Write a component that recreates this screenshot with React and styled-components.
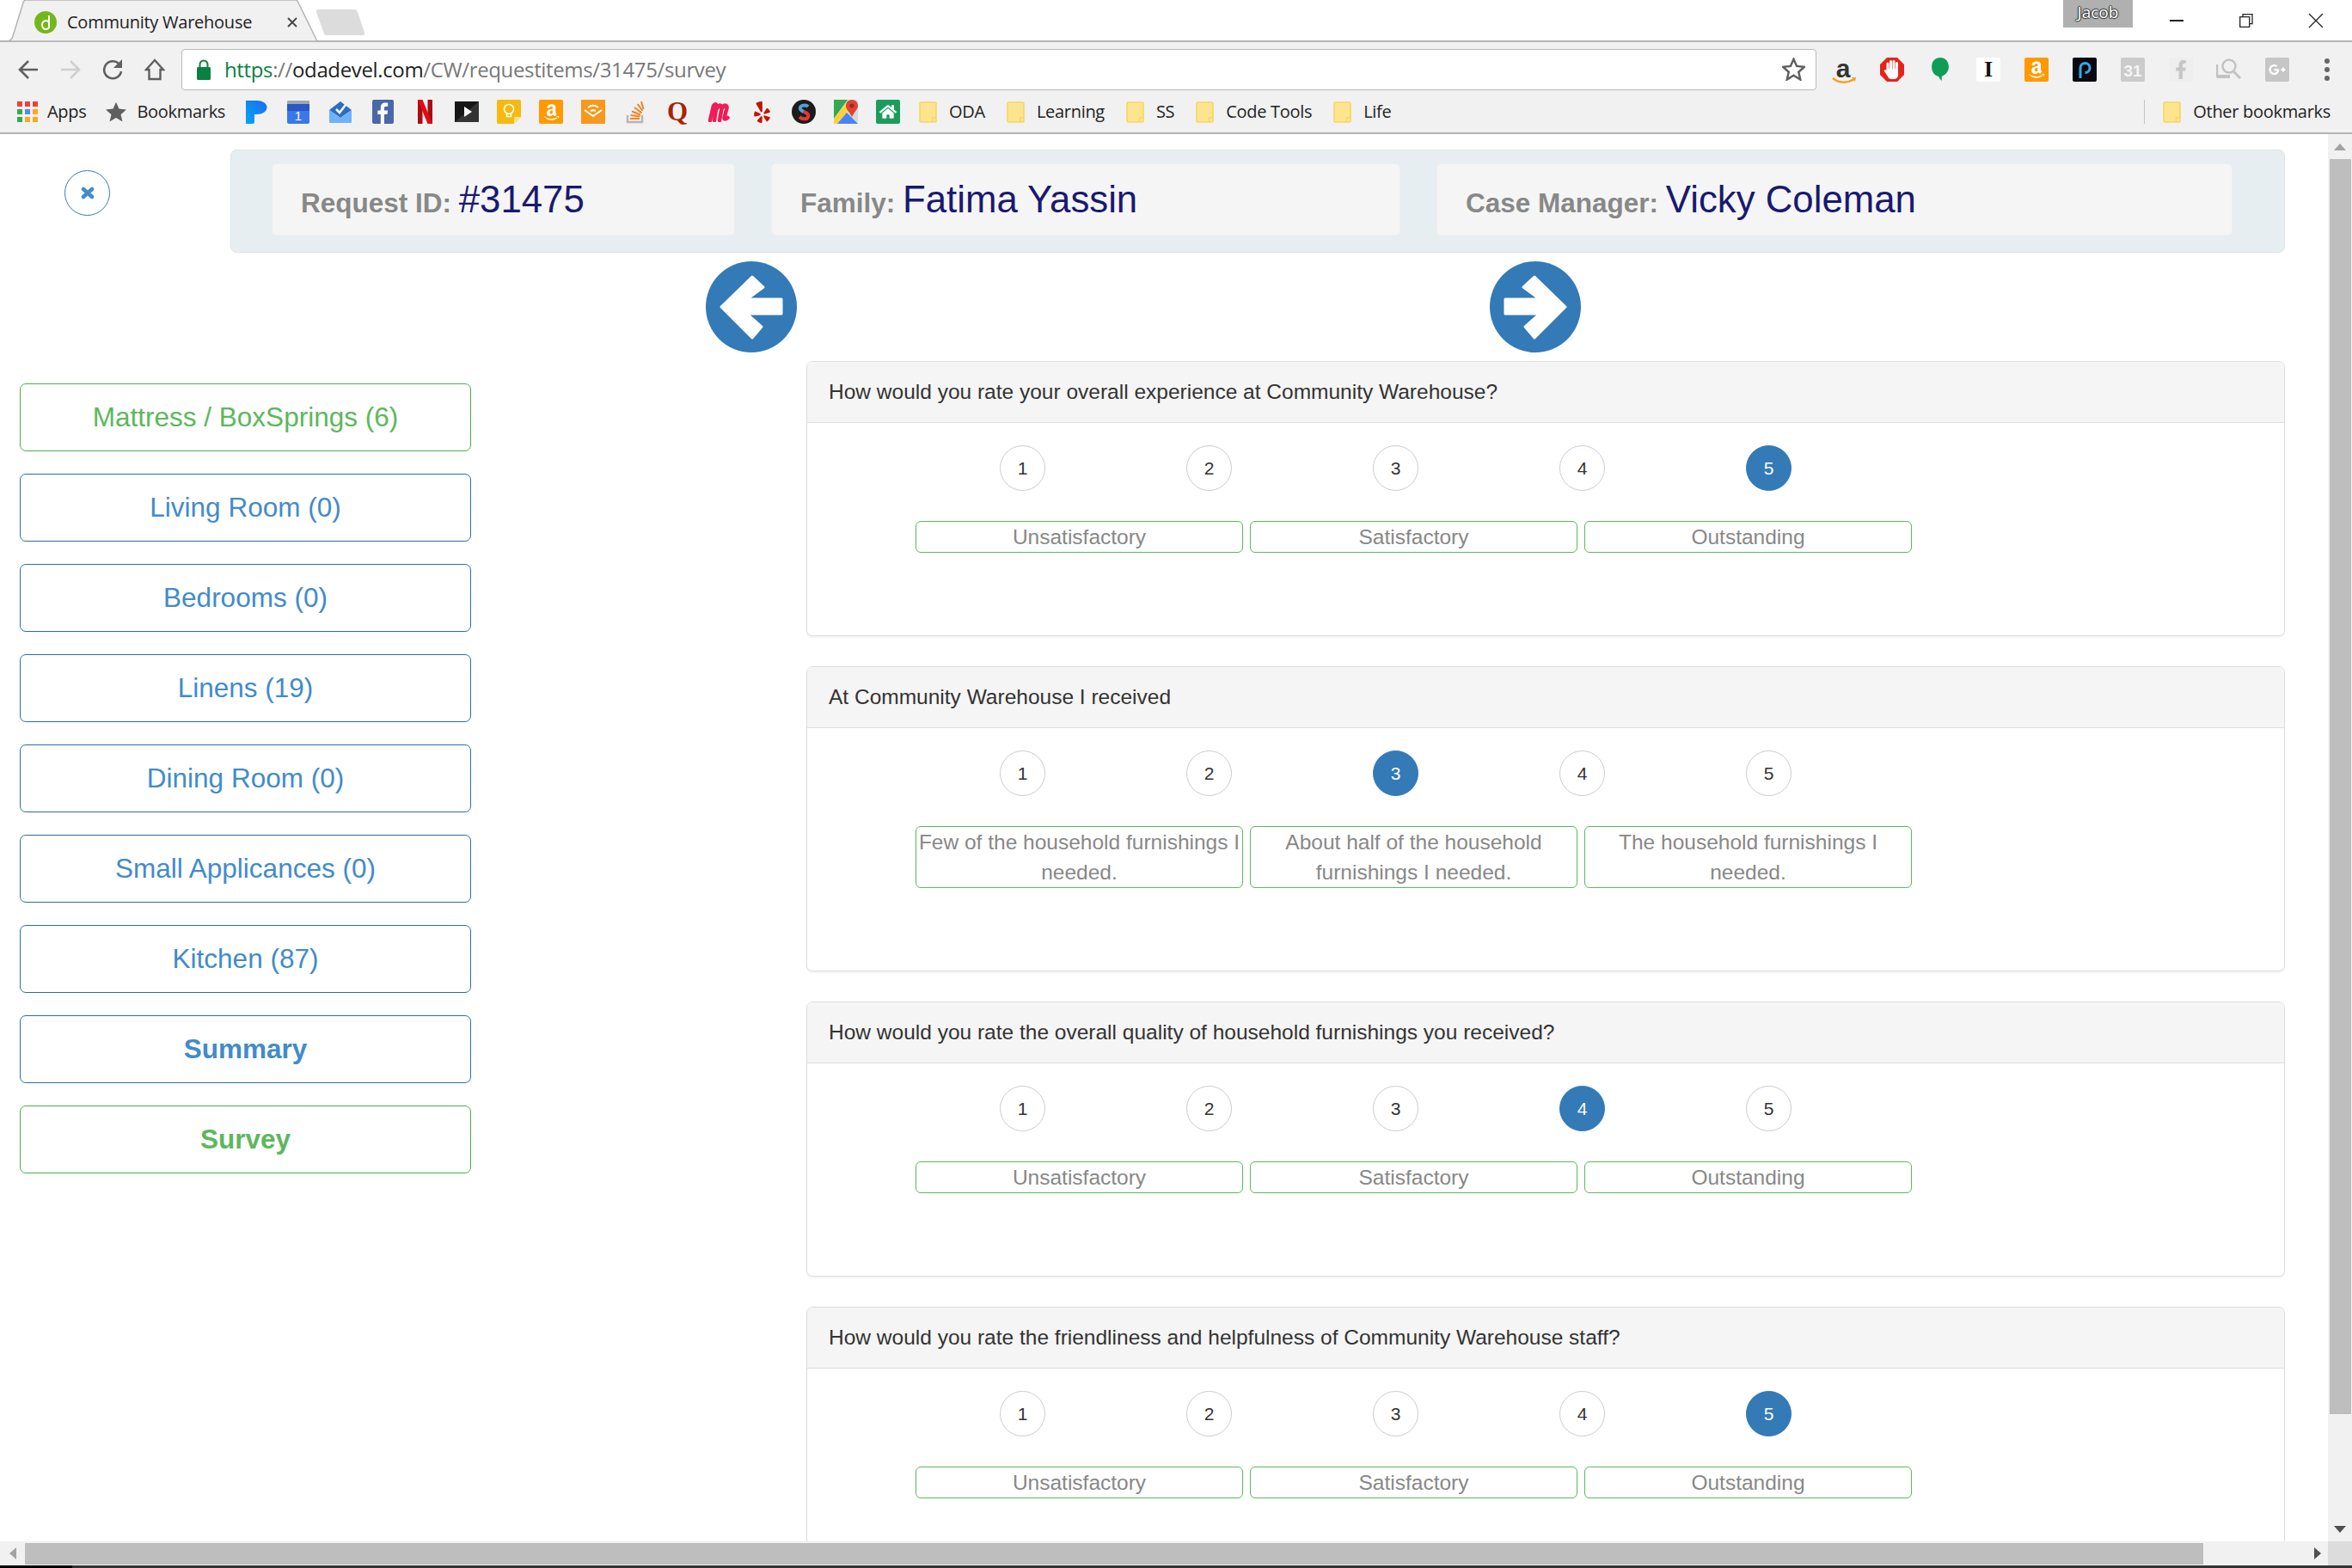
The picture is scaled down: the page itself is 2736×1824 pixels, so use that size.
import styled, { createGlobalStyle } from 'styled-components';
import { FaAmazon, FaYelp, FaHome, FaGooglePlusG, FaFacebookF } from 'react-icons/fa';

const GlobalStyle = createGlobalStyle`
  html, body {
    margin: 0;
    padding: 0;
    background: #fff;
    overflow: hidden;
  }

  * {
    box-sizing: border-box;
  }
`;

const Screen = styled.div`
  width: 2736px;
  height: 1824px;
  display: flex;
  flex-direction: column;
  font-family: "Liberation Sans", Arial, sans-serif;
  overflow: hidden;
`;

/* browser chrome */
const TabStrip = styled.div`
  height: 49px;
  flex: none;
  display: flex;
  align-items: flex-start;
  background: #fff;
  border-bottom: 2px solid #b4b4b4;
`;

const Tab = styled.div`
  position: relative;
  width: 365px;
  height: 49px;
  margin-left: 8px;
  padding: 13px 0 0 32px;
  display: flex;
  align-items: flex-start;
  gap: 12px;
  z-index: 1;
`;

const TabShape = styled.svg`
  position: absolute;
  top: 0;
  left: 0;
  z-index: -1;
`;

const TabTitle = styled.span`
  font: 20px/26px "Open Sans", sans-serif;
  color: #222;
  letter-spacing: -0.25px;
  white-space: nowrap;
`;

const TabClose = styled.span`
  margin-left: 28px;
  display: flex;
  padding-top: 6px;
`;

const NewTab = styled.svg`
  margin: 11px 0 0 -6px;
`;

const Account = styled.div`
  margin-left: auto;
  width: 81px;
  height: 32px;
  background: #b0b0b0;
  color: #fff;
  font: 19px/28px "Open Sans", sans-serif;
  text-align: center;
  text-shadow: 1px 0 1px #333, -1px 0 1px #333, 0 1px 1px #333, 0 -1px 1px #333;
`;

const WindowControls = styled.div`
  display: flex;
  margin: 0 2px 0 10px;
`;

const WindowButton = styled.div`
  width: 81px;
  height: 47px;
  display: flex;
  align-items: center;
  justify-content: center;
`;

const Toolbar = styled.div`
  height: 63px;
  flex: none;
  padding-left: 8px;
  display: flex;
  align-items: center;
  background: #f1f1f1;
`;

const NavButton = styled.div`
  width: 49px;
  height: 48px;
  flex: none;
  display: flex;
  align-items: center;
  justify-content: center;
`;

const Omnibox = styled.div`
  width: 1902px;
  height: 48px;
  flex: none;
  margin-left: 7px;
  padding: 0 12px 0 17px;
  display: flex;
  align-items: center;
  gap: 16px;
  background: #fff;
  border: 1px solid #b9b9b9;
  border-radius: 4px;
`;

const Url = styled.div`
  flex: 1;
  font: 24px/34px "Open Sans", sans-serif;
  letter-spacing: -0.36px;
  color: #777;
  white-space: nowrap;
`;

const UrlPart = styled.span`
  color: ${(p) => p.$color};
`;

const Extensions = styled.div`
  display: flex;
  margin-left: 4px;
`;

const ExtCell = styled.div`
  width: 56px;
  height: 48px;
  display: flex;
  align-items: center;
  justify-content: center;
`;

const MenuCell = styled(ExtCell)`
  width: 59px;
`;

const BookmarkBar = styled.div`
  height: 44px;
  flex: none;
  padding: 0 0 6px 20px;
  display: flex;
  align-items: center;
  gap: 22px;
  background: #f1f1f1;
  border-bottom: 2px solid #b4b4b4;
`;

const Bookmark = styled.div`
  display: flex;
  align-items: center;
  gap: 11px;
  font: 20px/26px "Open Sans", sans-serif;
  letter-spacing: -0.3px;
  color: #222;
  white-space: nowrap;
`;

const FolderMark = styled(Bookmark)`
  gap: 14px;
`;

const FolderRow = styled.div`
  display: flex;
  gap: 25px;
`;

const IconRow = styled.div`
  display: flex;
  gap: 21px;
`;

const Favicon = styled.div`
  width: 28px;
  height: 28px;
  flex: none;
  display: flex;
  align-items: center;
  justify-content: center;
`;

const Tile = styled.div`
  width: 28px;
  height: 28px;
  display: flex;
  align-items: center;
  justify-content: center;
  background: ${(p) => p.$bg};
  border-radius: 2px;
  color: ${(p) => p.$color || '#fff'};
`;

const GlyphLetter = styled.span`
  font: 700 ${(p) => p.$size}px/28px "Liberation Serif", serif;
  color: ${(p) => p.$color};
`;

const OtherBookmarks = styled.div`
  margin-left: auto;
  margin-right: 25px;
  padding-left: 21px;
  border-left: 1px solid #c4c4c4;
  height: 28px;
  display: flex;
  align-items: center;
`;

/* page area */
const Viewport = styled.div`
  flex: 1;
  min-height: 0;
  display: flex;
`;

const Page = styled.div`
  flex: 1;
  min-width: 0;
  padding-top: 18px;
  overflow: hidden;
  background: #fff;
`;

const TopRow = styled.div`
  display: flex;
  align-items: flex-start;
`;

const CloseCell = styled.div`
  width: 268px;
  flex: none;
  padding: 24px 0 0 75px;
`;

const CloseButton = styled.div`
  width: 53px;
  height: 53px;
  display: flex;
  align-items: center;
  justify-content: center;
  border: 1px solid #337ab7;
  border-radius: 50%;
`;

const RequestPanel = styled.div`
  width: 2390px;
  height: 120px;
  padding: 15px 47px;
  display: flex;
  gap: 42px;
  background: #e7eef1;
  border: 1px solid #dde4e8;
  border-radius: 7px;
`;

const InfoBox = styled.div`
  width: ${(p) => p.$width}px;
  height: 84px;
  flex: none;
  padding: 6px 0 0 33px;
  display: flex;
  align-items: baseline;
  line-height: 70px;
  white-space: pre;
  background: #f5f5f5;
  border: 1px solid #eeeeee;
  border-radius: 5px;
`;

const InfoLabel = styled.span`
  font-size: 31.5px;
  font-weight: 700;
  color: #888;
`;

const InfoValue = styled.span`
  font-size: 43.75px;
  color: #191970;
`;

const Columns = styled.div`
  display: flex;
  align-items: flex-start;
  margin-top: 10px;
`;

const SideNav = styled.nav`
  width: 525px;
  flex: none;
  margin: 142px 273px 0 23px;
  display: flex;
  flex-direction: column;
  gap: 26px;
`;

const NavLink = styled.a`
  height: 79px;
  display: flex;
  align-items: center;
  justify-content: center;
  font-size: 31.5px;
  font-weight: ${(p) => (p.$bold ? 700 : 400)};
  color: ${(p) => (p.$green ? '#5cb85c' : '#428bca')};
  background: #fff;
  border: 1.5px solid ${(p) => (p.$green ? '#4cae4c' : '#2e6da4')};
  border-radius: 7px;
`;

const SurveyColumn = styled.div`
  flex: 1;
  min-width: 0;
`;

const ArrowRow = styled.div`
  height: 106px;
  display: flex;
  align-items: center;
  gap: 806px;
`;

const Panels = styled.div`
  margin: 10px 50px 0 117px;
  display: flex;
  flex-direction: column;
  gap: 35px;
`;

const Panel = styled.section`
  background: #fff;
  border: 1px solid #ddd;
  border-radius: 7px;
  box-shadow: 0 2px 2px rgba(0, 0, 0, 0.05);
`;

const PanelHeading = styled.div`
  height: 71px;
  padding: 0 25px;
  display: flex;
  align-items: center;
  font-size: 24.5px;
  color: #333;
  background: #f5f5f5;
  border-bottom: 1px solid #ddd;
  border-radius: 6px 6px 0 0;
`;

const PanelBody = styled.div`
  padding: 26px 0 96px;
`;

const Scale = styled.div`
  padding-left: 224px;
  display: flex;
  gap: 164px;
`;

const ScaleDot = styled.div`
  width: 53px;
  height: 53px;
  display: flex;
  align-items: center;
  justify-content: center;
  font-size: 21px;
  color: ${(p) => (p.$active ? '#fff' : '#333')};
  background: ${(p) => (p.$active ? '#337ab7' : '#fff')};
  border: 1px solid ${(p) => (p.$active ? '#337ab7' : '#ccc')};
  border-radius: 50%;
`;

const Answers = styled.div`
  margin: 35px 0 0 126px;
  display: flex;
  align-items: flex-start;
  gap: 8px;
`;

const Answer = styled.div`
  width: 381px;
  padding: 0 1px;
  font-size: 24.5px;
  line-height: 35px;
  text-align: center;
  color: #888;
  border: 1.5px solid #5cb85c;
  border-radius: 6px;
`;

/* scrollbars */
const VScroll = styled.div`
  width: 28px;
  flex: none;
  display: flex;
  flex-direction: column;
  align-items: center;
  background: #f1f1f1;
`;

const VArrowCell = styled.div`
  height: 29px;
  flex: none;
  display: flex;
  align-items: center;
  justify-content: center;
`;

const VThumb = styled.div`
  width: 25px;
  height: 1460px;
  flex: none;
  background: #bebebe;
`;

const VTrack = styled.div`
  flex: 1;
  display: flex;
  align-items: flex-end;
  padding-bottom: 10px;
`;

const HScroll = styled.div`
  height: 28px;
  flex: none;
  display: flex;
  align-items: center;
  background: #f1f1f1;
`;

const HArrowCell = styled.div`
  width: 29px;
  flex: none;
  display: flex;
  justify-content: center;
`;

const HThumb = styled.div`
  width: 2534px;
  height: 25px;
  background: #bebebe;
`;

const HTrack = styled.div`
  flex: 1;
  display: flex;
  justify-content: flex-end;
  padding-right: 8px;
`;

const ScrollCorner = styled.div`
  width: 28px;
  height: 28px;
  background: #dcdcdc;
`;

const Taskbar = styled.div`
  height: 3px;
  flex: none;
  background: linear-gradient(to right, #000 84px, #333 84px);
`;

const categories = [
  { label: 'Mattress / BoxSprings (6)', green: true },
  { label: 'Living Room (0)' },
  { label: 'Bedrooms (0)' },
  { label: 'Linens (19)' },
  { label: 'Dining Room (0)' },
  { label: 'Small Applicances (0)' },
  { label: 'Kitchen (87)' },
  { label: 'Summary', bold: true },
  { label: 'Survey', bold: true, green: true },
];

const standardAnswers = ['Unsatisfactory', 'Satisfactory', 'Outstanding'];

const questions = [
  {
    title: 'How would you rate your overall experience at Community Warehouse?',
    selected: 5,
    answers: standardAnswers,
  },
  {
    title: 'At Community Warehouse I received',
    selected: 3,
    answers: [
      'Few of the household furnishings I needed.',
      'About half of the household furnishings I needed.',
      'The household furnishings I needed.',
    ],
  },
  {
    title: 'How would you rate the overall quality of household furnishings you received?',
    selected: 4,
    answers: standardAnswers,
  },
  {
    title: 'How would you rate the friendliness and helpfulness of Community Warehouse staff?',
    selected: 5,
    answers: standardAnswers,
  },
];

const Folder = () => (
  <svg width="21" height="25" viewBox="0 0 21 25">
    <path d="M1 2.500A1.500 1.500 0 0 1 2.500 1h16A1.500 1.500 0 0 1 20 2.500V23a1 1 0 0 1-1 1H2.500A1.500 1.500 0 0 1 1 22.500z" fill="#fde48f" stroke="#f7d566" strokeWidth="1.600" />
    <path d="M15.500 24v-5h4.500" fill="none" stroke="#f7d566" strokeWidth="1.500" />
  </svg>
);

const AppsIcon = () => (
  <svg width="24" height="24" viewBox="0 0 24 24">
    {['#ef4136', '#ef4136', '#ef4136', '#34a853', '#4c8df6', '#fbab18', '#34a853', '#fbab18', '#fbab18'].map((fill, i) => (
      <rect key={i} x={(i % 3) * 9} y={Math.floor(i / 3) * 9} width="6" height="6" fill={fill} />
    ))}
  </svg>
);

const Pandora = () => (
  <svg width="25" height="27" viewBox="0 0 25 27">
    <defs>
      <linearGradient id="pandora" x1="0" y1="1" x2="1" y2="0">
        <stop offset="0" stopColor="#00a6f0" />
        <stop offset="1" stopColor="#1e6cf2" />
      </linearGradient>
    </defs>
    <path d="M0 0h13a11.500 8 0 0 1 0 16h-3v8.500A2.500 2.500 0 0 1 7.500 27H0z" fill="url(#pandora)" />
  </svg>
);

const Calendar = () => (
  <svg width="28" height="28" viewBox="0 0 28 28">
    <rect x="1" y="1" width="26" height="6" rx="1" fill="#9ea7b3" />
    <rect x="1" y="5" width="26" height="23" rx="2" fill="#3b78e7" />
    <rect x="1" y="5" width="26" height="8" fill="#2a56c6" />
    <text x="14" y="24" fontSize="15" fontFamily="Liberation Sans" fill="#fff" textAnchor="middle">1</text>
  </svg>
);

const InboxIcon = () => (
  <svg width="28" height="28" viewBox="0 0 28 28">
    <path d="M1 12 14 2l13 10-13 9z" fill="#2b6ccb" />
    <path d="M1 12l13 9 13-9v14a1 1 0 0 1-1 1H2a1 1 0 0 1-1-1z" fill="#6fb2f7" />
    <path d="M9 11l4 4 7-9" fill="none" stroke="#fff" strokeWidth="2.500" />
  </svg>
);

const Facebook = () => (
  <svg width="25" height="28" viewBox="0 0 25 28">
    <rect width="25" height="28" rx="2" fill="#4a67a8" />
    <path d="M14 28V17h3.500l.6-4.500H14V10c0-1.300.4-2.200 2.200-2.200h2V3.600c-.4 0-1.700-.2-3.100-.2-3.200 0-5.300 1.900-5.300 5.500v3.600H6.300V17h3.500v11z" fill="#fff" />
  </svg>
);

const Netflix = () => (
  <svg width="17" height="28" viewBox="0 0 17 28">
    <path d="M0 0h5.500v28L0 28z" fill="#a80e12" />
    <path d="M11.500 0H17v28l-5.500-1z" fill="#a80e12" />
    <path d="M0 0h5.500L17 28h-5.500z" fill="#e50914" />
  </svg>
);

const Player = () => (
  <svg width="28" height="24" viewBox="0 0 28 24">
    <rect width="28" height="24" fill="#161616" />
    <path d="M0 24 28 0v24z" fill="#333" />
    <path d="M11 6l9 6-9 6z" fill="#fff" />
  </svg>
);

const Keep = () => (
  <svg width="28" height="28" viewBox="0 0 28 28">
    <path d="M2 0h24a2 2 0 0 1 2 2v18l-8 8H2a2 2 0 0 1-2-2V2a2 2 0 0 1 2-2z" fill="#f6b90f" />
    <path d="M20 28v-8h8z" fill="#fbe08a" />
    <circle cx="14" cy="11" r="5.500" fill="none" stroke="#fff" strokeWidth="1.500" />
    <path d="M11.500 16v3.500h5V16" fill="none" stroke="#fff" strokeWidth="1.500" />
  </svg>
);

const Audible = () => (
  <svg width="28" height="28" viewBox="0 0 28 28">
    <rect width="28" height="28" fill="#f7991c" />
    <path d="M4 12l10 7 10-7M8 9c4-3 8-3 12 0M11 13c2-1 4-1 6 0" fill="none" stroke="#fff" strokeWidth="2" />
  </svg>
);

const StackOverflow = () => (
  <svg width="22" height="28" viewBox="0 0 22 28">
    <path d="M2 18v8h17v-8" fill="none" stroke="#b6b6b6" strokeWidth="2.500" />
    <path d="M5 22h11M5.500 18l11 1.500M7 13.500l10 4M10 9l8.500 6.500M13.500 5l6 8M18 2l2.500 9" fill="none" stroke="#f48024" strokeWidth="2" />
  </svg>
);

const MintM = () => (
  <svg width="28" height="24" viewBox="0 0 28 24">
    <path d="M3 22 7 5c2-3 4-2 3.500 1L8 22M11 8c3-5 6-4 5.500 0L14 22M17 8c3-5 6-4 5.500 0l-3 11c0 2 2 2 4 0" fill="none" stroke="#ee1c5a" strokeWidth="4.500" strokeLinecap="round" />
  </svg>
);

const Sbadge = () => (
  <svg width="28" height="28" viewBox="0 0 28 28">
    <circle cx="14" cy="14" r="14" fill="#1c1c1c" />
    <path d="M19 8c-2-2-8-2-9 1s2 4 4 5" fill="none" stroke="#4fa3d9" strokeWidth="4" />
    <path d="M14 14c3 1 6 3 5 6s-7 3-10 0" fill="none" stroke="#e8362c" strokeWidth="4" />
  </svg>
);

const Maps = () => (
  <svg width="28" height="28" viewBox="0 0 28 28">
    <rect width="28" height="28" rx="2" fill="#d8d8d8" />
    <path d="M0 0h16L0 22z" fill="#35a852" />
    <path d="M0 22 16 2l3 8L4 28H0z" fill="#fbd23c" />
    <path d="M4 28l11-13 13 13z" fill="#4a84f0" />
    <path d="M21 0c4 0 7 3 7 7 0 4-4 7-7 13-3-6-7-9-7-13 0-4 3-7 7-7z" fill="#db4437" />
    <circle cx="21" cy="7" r="2.500" fill="#a52714" />
  </svg>
);

const Lock = () => (
  <svg width="16" height="24" viewBox="0 0 16 24">
    <rect x="0" y="9" width="16" height="15" rx="1.500" fill="#0b8043" />
    <path d="M3.500 10V6a4.500 4.500 0 0 1 9 0v4" fill="none" stroke="#0b8043" strokeWidth="2" />
  </svg>
);

const Star = ({ outline, size }) => (
  <svg width={size} height={size} viewBox="0 0 24 24">
    <path
      d="M12 1.500l3.200 7.300 7.900.8-6 5.300 1.800 7.800L12 18.500l-6.900 4.200 1.800-7.800-6-5.300 7.900-.8z"
      fill={outline ? 'none' : '#5f5f5f'}
      stroke="#5f5f5f"
      strokeWidth={outline ? 2.2 : 0}
    />
  </svg>
);

const AmazonDark = () => (
  <svg width="30" height="38" viewBox="0 0 30 38">
    <text x="14" y="28" fontSize="30" fontWeight="700" fontFamily="Liberation Sans" fill="#333" textAnchor="middle">a</text>
    <path d="M2 29c7 6 17 6 25 1" fill="none" stroke="#f6a01a" strokeWidth="2.500" />
    <path d="M24 28h5l-1 5z" fill="#f6a01a" />
  </svg>
);

const AdBlock = () => (
  <svg width="28" height="28" viewBox="0 0 28 28">
    <path d="M8 0h12l8 8v12l-8 8H8l-8-8V8z" fill="#e3241b" />
    <path d="M9 15V7M12.500 13V4.500M16 13V4.500M19.500 15V6.500" stroke="#fff" strokeWidth="3" strokeLinecap="round" />
    <path d="M7.500 13h13.500v7c0 3-2 5-5 5h-3c-2 0-3-1-4-3l-4-6c-.8-1.500 1-2.500 2.500-1z" fill="#fff" />
  </svg>
);

const Hangouts = () => (
  <svg width="22" height="27" viewBox="0 0 24 30">
    <path d="M12 0c6.600 0 11 5 11 12 0 6-4 10-9 12.500V30c-2-1.500-3-3.500-4-5.500C4 23 1 18 1 12 1 5 5.400 0 12 0z" fill="#0f9d58" />
  </svg>
);

const PExt = () => (
  <svg width="28" height="28" viewBox="0 0 28 28">
    <rect width="28" height="28" rx="2" fill="#06090f" />
    <path d="M9 24V12a5.500 5.500 0 1 1 5.500 5.500" fill="none" stroke="#38a8e6" strokeWidth="3" />
  </svg>
);

const GrayCal = () => (
  <svg width="28" height="28" viewBox="0 0 28 28">
    <rect width="28" height="28" rx="2" fill="#cbcbcb" />
    <text x="14" y="22" fontSize="19" fontWeight="700" fontFamily="Liberation Sans" fill="#f5f5f5" textAnchor="middle">31</text>
  </svg>
);

const GraySearch = () => (
  <svg width="30" height="28" viewBox="0 0 30 28">
    <circle cx="15" cy="10" r="7.500" fill="none" stroke="#c2c2c2" strokeWidth="2.500" />
    <path d="M20 16l8 8" stroke="#c2c2c2" strokeWidth="3" />
    <path d="M1 8v14h15" fill="none" stroke="#c2c2c2" strokeWidth="2.500" />
    <rect x="1" y="20" width="15" height="4" fill="#c2c2c2" />
  </svg>
);

// the circle arrows of the page, drawn from the reference's outline
const CircleArrow = ({ flip }) => (
  <svg width="106" height="106" viewBox="0 0 106 106">
    <circle cx="53" cy="53" r="53" fill="#337ab7" />
    <path
      d={flip ? 'M88 53 52 18 39 30 58 44H18V61H58L41 76 52 89z' : 'M18 53 54 18 67 30 48 44H88V61H48L65 76 54 89z'}
      fill="#fff"
      stroke="#fff"
      strokeWidth="3"
      strokeLinejoin="round"
    />
  </svg>
);

const bookmarkIcons = [
  <Pandora key="pandora" />,
  <Calendar key="calendar" />,
  <InboxIcon key="inbox" />,
  <Facebook key="facebook" />,
  <Netflix key="netflix" />,
  <Player key="player" />,
  <Keep key="keep" />,
  <Tile key="amazon" $bg="#ff9900"><FaAmazon size={21} /></Tile>,
  <Audible key="audible" />,
  <StackOverflow key="so" />,
  <GlyphLetter key="quora" $size={31} $color="#a82400">Q</GlyphLetter>,
  <MintM key="mint" />,
  <FaYelp key="yelp" size={25} color="#c41200" />,
  <Sbadge key="sbadge" />,
  <Maps key="maps" />,
  <Tile key="home" $bg="#1a9c5d"><FaHome size={20} /></Tile>,
];

const extensionIcons = [
  <AmazonDark key="amazon" />,
  <AdBlock key="adblock" />,
  <Hangouts key="hangouts" />,
  <Tile key="instapaper" $bg="#fff"><GlyphLetter $size={26} $color="#111">I</GlyphLetter></Tile>,
  <Tile key="amazon-orange" $bg="#ff9900"><FaAmazon size={22} /></Tile>,
  <PExt key="p" />,
  <GrayCal key="cal" />,
  <Tile key="fb" $bg="#eeeeee" $color="#c6c6c6"><FaFacebookF size={22} /></Tile>,
  <GraySearch key="search" />,
  <Tile key="gplus" $bg="#c6c6c6"><FaGooglePlusG size={20} /></Tile>,
];

function BrowserChrome() {
  return (
    <>
      <TabStrip>
        <Tab>
          <TabShape width="365" height="49" viewBox="0 0 365 49">
            <path d="M0 48c4 0 6-2 7-6L19 3c.5-2 2-3 4-3h312c2 0 3.500 1 4 3l22 45z" fill="#f1f1f1" stroke="#b4b4b4" strokeWidth="1.500" />
          </TabShape>
          <svg width="26" height="26" viewBox="0 0 26 26">
            <circle cx="13" cy="13" r="13" fill="#74b71b" />
            <path d="M17 5v15M17 13a4.500 5 0 1 0 0 6" fill="none" stroke="#fff" strokeWidth="2" />
          </svg>
          <TabTitle>Community Warehouse</TabTitle>
          <TabClose>
            <svg width="14" height="14" viewBox="0 0 14 14">
              <path d="M2 2l10 10M12 2 2 12" stroke="#444" strokeWidth="1.800" />
            </svg>
          </TabClose>
        </Tab>
        <NewTab width="60" height="30" viewBox="0 0 60 30">
          <path d="M3 0h42c2 0 3 1 4 3l8 24c.5 2-.5 3-2 3H13c-2 0-3-1-3.500-3L1 3c-.5-2 .5-3 2-3z" fill="#dcdcdc" />
        </NewTab>
        <Account>Jacob</Account>
        <WindowControls>
          <WindowButton>
            <svg width="16" height="2" viewBox="0 0 16 2"><rect width="16" height="2" fill="#222" /></svg>
          </WindowButton>
          <WindowButton>
            <svg width="16" height="16" viewBox="0 0 16 16">
              <path d="M4 3V.7h11v11h-3M.7 3.700h11v11.600H.7z" fill="none" stroke="#222" strokeWidth="1.300" />
            </svg>
          </WindowButton>
          <WindowButton>
            <svg width="18" height="18" viewBox="0 0 18 18">
              <path d="M1 1l16 16M17 1 1 17" stroke="#222" strokeWidth="1.300" />
            </svg>
          </WindowButton>
        </WindowControls>
      </TabStrip>

      <Toolbar>
        <NavButton>
          <svg width="24" height="24" viewBox="0 0 24 24">
            <path d="M23 12H2M12 2 2 12l10 10" fill="none" stroke="#5f5f5f" strokeWidth="2.600" />
          </svg>
        </NavButton>
        <NavButton>
          <svg width="24" height="24" viewBox="0 0 24 24">
            <path d="M1 12h21M12 2l10 10-10 10" fill="none" stroke="#cfcfcf" strokeWidth="2.600" />
          </svg>
        </NavButton>
        <NavButton>
          <svg width="24" height="26" viewBox="0 0 24 26">
            <path d="M20 7a10 10 0 1 0 2 8" fill="none" stroke="#5f5f5f" strokeWidth="2.600" />
            <path d="M23 1v10H13z" fill="#5f5f5f" />
          </svg>
        </NavButton>
        <NavButton>
          <svg width="24" height="26" viewBox="0 0 24 26">
            <path d="M12 2 2 13h3.500v11h13V13H22z" fill="none" stroke="#5f5f5f" strokeWidth="2.400" />
          </svg>
        </NavButton>
        <Omnibox>
          <Lock />
          <Url>
            <UrlPart $color="#0b8043">https</UrlPart>://
            <UrlPart $color="#222">odadevel.com</UrlPart>/CW/requestitems/31475/survey
          </Url>
          <Star outline size={27} />
        </Omnibox>
        <Extensions>
          {extensionIcons.map((icon) => (
            <ExtCell key={icon.key}>{icon}</ExtCell>
          ))}
          <MenuCell>
            <svg width="6" height="26" viewBox="0 0 6 26">
              <circle cx="3" cy="3" r="3" fill="#666" />
              <circle cx="3" cy="13" r="3" fill="#666" />
              <circle cx="3" cy="23" r="3" fill="#666" />
            </svg>
          </MenuCell>
        </Extensions>
      </Toolbar>

      <BookmarkBar>
        <Bookmark><AppsIcon />Apps</Bookmark>
        <Bookmark><Star size={26} />Bookmarks</Bookmark>
        <IconRow>
          {bookmarkIcons.map((icon) => (
            <Favicon key={icon.key}>{icon}</Favicon>
          ))}
        </IconRow>
        <FolderRow>
          {['ODA', 'Learning', 'SS', 'Code Tools', 'Life'].map((name) => (
            <FolderMark key={name}><Folder />{name}</FolderMark>
          ))}
        </FolderRow>
        <OtherBookmarks>
          <FolderMark><Folder />Other bookmarks</FolderMark>
        </OtherBookmarks>
      </BookmarkBar>
    </>
  );
}

function Question({ title, selected, answers }) {
  return (
    <Panel>
      <PanelHeading>{title}</PanelHeading>
      <PanelBody>
        <Scale>
          {[1, 2, 3, 4, 5].map((n) => (
            <ScaleDot key={n} $active={n === selected}>{n}</ScaleDot>
          ))}
        </Scale>
        <Answers>
          {answers.map((answer) => (
            <Answer key={answer}>{answer}</Answer>
          ))}
        </Answers>
      </PanelBody>
    </Panel>
  );
}

function App() {
  return (
    <Screen>
      <GlobalStyle />
      <BrowserChrome />
      <Viewport>
        <Page>
          <TopRow>
            <CloseCell>
              <CloseButton>
                <svg width="16" height="15" viewBox="0 0 16 15">
                  <path d="M3 3l10 9M13 3 3 12" stroke="#428bca" strokeWidth="4.500" strokeLinecap="round" />
                </svg>
              </CloseButton>
            </CloseCell>
            <RequestPanel>
              <InfoBox $width={539}>
                <InfoLabel>Request ID: </InfoLabel>
                <InfoValue>#31475</InfoValue>
              </InfoBox>
              <InfoBox $width={732}>
                <InfoLabel>Family: </InfoLabel>
                <InfoValue>Fatima Yassin</InfoValue>
              </InfoBox>
              <InfoBox $width={926}>
                <InfoLabel>Case Manager: </InfoLabel>
                <InfoValue>Vicky Coleman</InfoValue>
              </InfoBox>
            </RequestPanel>
          </TopRow>
          <Columns>
            <SideNav>
              {categories.map((c) => (
                <NavLink key={c.label} $green={c.green} $bold={c.bold}>{c.label}</NavLink>
              ))}
            </SideNav>
            <SurveyColumn>
              <ArrowRow>
                <CircleArrow />
                <CircleArrow flip />
              </ArrowRow>
              <Panels>
                {questions.map((q) => (
                  <Question key={q.title} {...q} />
                ))}
              </Panels>
            </SurveyColumn>
          </Columns>
        </Page>
        <VScroll>
          <VArrowCell>
            <svg width="14" height="8" viewBox="0 0 14 8"><path d="M7 0l7 8H0z" fill="#a3a3a3" /></svg>
          </VArrowCell>
          <VThumb />
          <VTrack>
            <svg width="14" height="8" viewBox="0 0 14 8"><path d="M7 8 14 0H0z" fill="#505050" /></svg>
          </VTrack>
        </VScroll>
      </Viewport>
      <HScroll>
        <HArrowCell>
          <svg width="8" height="14" viewBox="0 0 8 14"><path d="M0 7l8-7v14z" fill="#a3a3a3" /></svg>
        </HArrowCell>
        <HThumb />
        <HTrack>
          <svg width="8" height="14" viewBox="0 0 8 14"><path d="M8 7 0 0v14z" fill="#505050" /></svg>
        </HTrack>
        <ScrollCorner />
      </HScroll>
      <Taskbar />
    </Screen>
  );
}

export default App;
